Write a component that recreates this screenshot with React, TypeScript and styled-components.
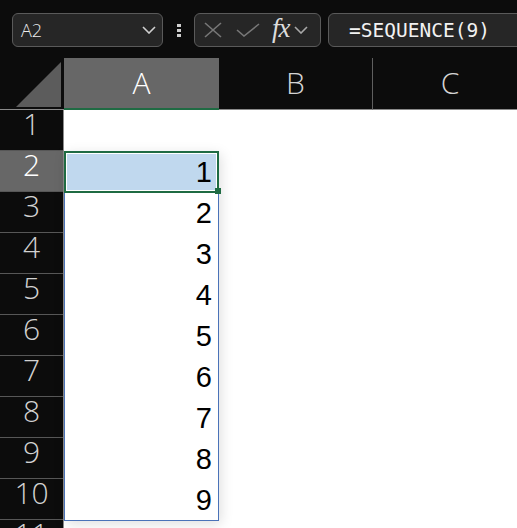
import React from 'react';
import styled, {createGlobalStyle} from 'styled-components';

const GlobalStyle = createGlobalStyle`
  html, body {
    margin: 0;
    padding: 0;
    background: #0c0c0c;
    overflow: hidden;
  }
`;

const uiFont = `"Open Sans", "Noto Sans", "DejaVu Sans", sans-serif`;
const green = '#1f6b43';

const Window = styled.div`
    width: 517px;
    height: 528px;
    background: #0c0c0c;
    overflow: hidden;
`

// Строка формул
const TopBar = styled.div`
    display: flex;
    align-items: flex-start;
    height: 58px;
    box-sizing: border-box;
    padding: 13px 0 0 12px;
`
const Box = styled.div`
    height: 34px;
    box-sizing: border-box;
    border: 1px solid #5a5a5a;
    border-radius: 6px;
    background: #262626;
    display: flex;
    align-items: center;
    flex-shrink: 0;
`
const NameBox = styled(Box)`
    width: 151px;
    padding: 0 6px 0 8px;
    justify-content: space-between;
`
const NameText = styled.span`
    font-family: ${uiFont};
    font-weight: 300;
    font-size: 18px;
    color: #ececec;
`
const MoreDots = styled.div`
    width: 31px;
    height: 34px;
    display: flex;
    flex-direction: column;
    align-items: center;
    justify-content: center;
    gap: 2px;
    flex-shrink: 0;
    span {
        width: 4px;
        height: 3px;
        background: #cfcfcf;
    }
`
const ToolBox = styled(Box)`
    width: 127px;
    padding: 0 4px 0 9px;
`
const Fx = styled.span`
    font-family: "Liberation Serif", "DejaVu Serif", serif;
    font-style: italic;
    font-size: 27px;
    line-height: 27px;
    color: #dcdcdc;
    margin: 0 4px 3px 12px;
    letter-spacing: -1px;
`
const FormulaBox = styled(Box)`
    margin-left: 7px;
    width: 240px;
    padding-left: 20px;
`
const FormulaText = styled.span`
    font-family: "DejaVu Sans Mono", "Liberation Mono", monospace;
    font-size: 19.5px;
    color: #f2f2f2;
`

// Лист
const HeaderRow = styled.div`
    display: flex;
    height: 52px;
`
const Corner = styled.div`
    width: 64px;
    flex-shrink: 0;
    box-sizing: border-box;
    border-bottom: 1px solid #8a8a8a;
    svg { display: block; }
`
const ColHeader = styled.div<{ $w: number; $active?: boolean; $sep?: boolean }>`
    width: ${p => p.$w}px;
    flex-shrink: 0;
    box-sizing: border-box;
    display: flex;
    align-items: center;
    justify-content: center;
    font-family: ${uiFont};
    font-weight: 300;
    font-size: 30px;
    line-height: 30px;
    color: ${p => p.$active ? '#ffffff' : '#d4d4d4'};
    background: ${p => p.$active ? '#676767' : 'transparent'};
    border-bottom: ${p => p.$active ? `2px solid ${green}` : '1px solid #8a8a8a'};
    border-left: ${p => p.$sep ? '1px solid #5f5f5f' : 'none'};
    padding-bottom: ${p => p.$active ? '0' : '1px'};
`
const Body = styled.div`
    display: flex;
`
const RowHeaders = styled.div`
    width: 64px;
    flex-shrink: 0;
    box-sizing: border-box;
    border-right: 1px solid #8c8c8c;
`
const RowHeader = styled.div<{ $active?: boolean }>`
    height: 41px;
    box-sizing: border-box;
    border-bottom: 1px solid #575757;
    display: flex;
    justify-content: center;
    align-items: flex-start;
    font-family: ${uiFont};
    font-weight: 300;
    font-size: 30px;
    line-height: 28px;
    color: ${p => p.$active ? '#ffffff' : '#d2d2d2'};
    background: ${p => p.$active ? '#676767' : 'transparent'};
`
const Cells = styled.div`
    flex: 1;
    height: 480px;
    background: #ffffff;
`
const ColumnA = styled.div`
    width: 155px;
    display: flex;
    flex-direction: column;
`
const Cell = styled.div`
    height: 41px;
    flex-shrink: 0;
    box-sizing: border-box;
    display: flex;
    justify-content: flex-end;
    align-items: flex-end;
    padding: 0 6px 5px 0;
    font-family: "Liberation Sans", Arial, sans-serif;
    font-size: 29px;
    line-height: 29px;
    color: #000;
`
// Диапазон динамического массива
const SpillRange = styled.div`
    border: 1px solid #4a72b8;
    border-top: none;
    box-shadow: 2px 3px 12px rgba(0, 0, 0, 0.13);
`
const ActiveCell = styled(Cell)`
    position: relative;
    background: #c0d8ee;
    &::after {
        content: '';
        position: absolute;
        top: 0;
        left: -1px;
        right: -1px;
        bottom: -1px;
        border: 2px solid ${green};
        box-shadow: inset 0 0 0 1px #ffffff;
    }
`
const FillHandle = styled.span`
    position: absolute;
    right: -3px;
    bottom: -2px;
    width: 6px;
    height: 6px;
    background: ${green};
    z-index: 2;
`

const Chevron = ({color = '#cfcfcf'}: { color?: string }) => (
    <svg width="14" height="8" viewBox="0 0 14 8">
        <polyline points="1,1 7,7 13,1" fill="none" stroke={color} strokeWidth="1.6"/>
    </svg>
);

const values = [1, 2, 3, 4, 5, 6, 7, 8, 9];

const App = () => {
    return (
        <Window>
            <GlobalStyle/>
            <TopBar>
                <NameBox>
                    <NameText>A2</NameText>
                    <Chevron/>
                </NameBox>
                <MoreDots><span/><span/><span/></MoreDots>
                <ToolBox>
                    <svg width="18" height="16" viewBox="0 0 18 16">
                        <line x1="1" y1="1" x2="17" y2="15" stroke="#777" strokeWidth="1.6"/>
                        <line x1="1" y1="15" x2="17" y2="1" stroke="#777" strokeWidth="1.6"/>
                    </svg>
                    <svg width="24" height="14" viewBox="0 0 24 14" style={{marginLeft: 14}}>
                        <polyline points="1,7 8,13 23,1" fill="none" stroke="#777" strokeWidth="1.6"/>
                    </svg>
                    <Fx>fx</Fx>
                    <Chevron color="#a8a8a8"/>
                </ToolBox>
                <FormulaBox>
                    <FormulaText>=SEQUENCE(9)</FormulaText>
                </FormulaBox>
            </TopBar>

            <HeaderRow>
                <Corner>
                    <svg width="64" height="51" viewBox="0 0 64 51">
                        <polygon points="16,49 61,49 61,4" fill="#5c5c5c"/>
                    </svg>
                </Corner>
                <ColHeader $w={155} $active>A</ColHeader>
                <ColHeader $w={153}>B</ColHeader>
                <ColHeader $w={155} $sep>C</ColHeader>
            </HeaderRow>

            <Body>
                <RowHeaders>
                    {[1, 2, 3, 4, 5, 6, 7, 8, 9, 10, 11].map(n => (
                        <RowHeader key={n} $active={n === 2}>{n}</RowHeader>
                    ))}
                </RowHeaders>
                <Cells>
                    <ColumnA>
                        <Cell/>
                        <SpillRange>
                            {values.map(v => v === 1 ? (
                                <ActiveCell key={v}>{v}<FillHandle/></ActiveCell>
                            ) : (
                                <Cell key={v}>{v}</Cell>
                            ))}
                        </SpillRange>
                    </ColumnA>
                </Cells>
            </Body>
        </Window>
    );
};

export default App;
